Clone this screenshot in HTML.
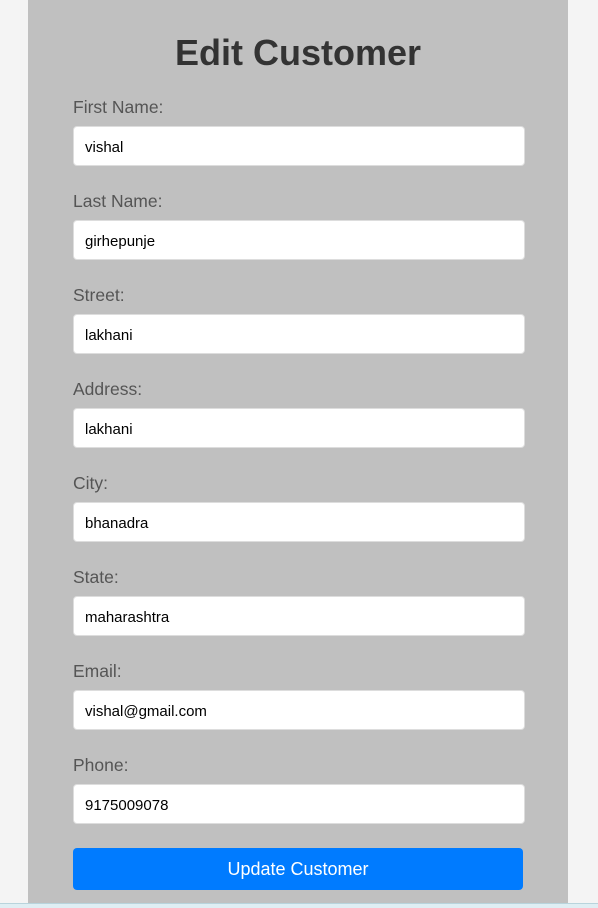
<!DOCTYPE html>
<html><head><style>
body{margin:0;background:#f4f4f4;width:598px;height:907px;overflow:hidden;font-family:"Liberation Sans",Arial,sans-serif;position:relative}
.panel{position:absolute;left:28px;top:0;width:540px;height:907px;background:#c0c0c0}
h1{position:absolute;left:0;width:540px;top:33px;margin:0;text-align:center;font-size:36px;line-height:40px;font-weight:bold;color:#333}
.lbl{position:absolute;left:45px;font-size:17.5px;color:#555;line-height:20px;margin-top:1px}
.inp{position:absolute;left:45px;height:38px;background:#fff;border:1px solid #ddd;border-radius:4px;font-size:15px;line-height:42px;padding-left:11px;box-sizing:content-box;width:439px;color:#000;overflow:hidden}
.btn{position:absolute;left:45px;top:848px;width:450px;height:42px;background:#007bff;border-radius:4px;color:#fff;font-size:18px;text-align:center;line-height:42px}
.bot{position:absolute;left:0;top:903px;width:598px;height:4px;background:#dfeef3;border-top:1px solid #b8d4dc}
</style></head><body>
<div class="panel">
<h1>Edit Customer</h1>
<div class="lbl" style="top:96px">First Name:</div><div class="inp" style="top:126px">vishal</div>
<div class="lbl" style="top:190px">Last Name:</div><div class="inp" style="top:220px">girhepunje</div>
<div class="lbl" style="top:284px">Street:</div><div class="inp" style="top:314px">lakhani</div>
<div class="lbl" style="top:378px">Address:</div><div class="inp" style="top:408px">lakhani</div>
<div class="lbl" style="top:472px">City:</div><div class="inp" style="top:502px">bhanadra</div>
<div class="lbl" style="top:566px">State:</div><div class="inp" style="top:596px">maharashtra</div>
<div class="lbl" style="top:660px">Email:</div><div class="inp" style="top:690px">vishal@gmail.com</div>
<div class="lbl" style="top:754px">Phone:</div><div class="inp" style="top:784px">9175009078</div>
<div class="btn">Update Customer</div>
</div>
<div class="bot"></div>
</body></html>
